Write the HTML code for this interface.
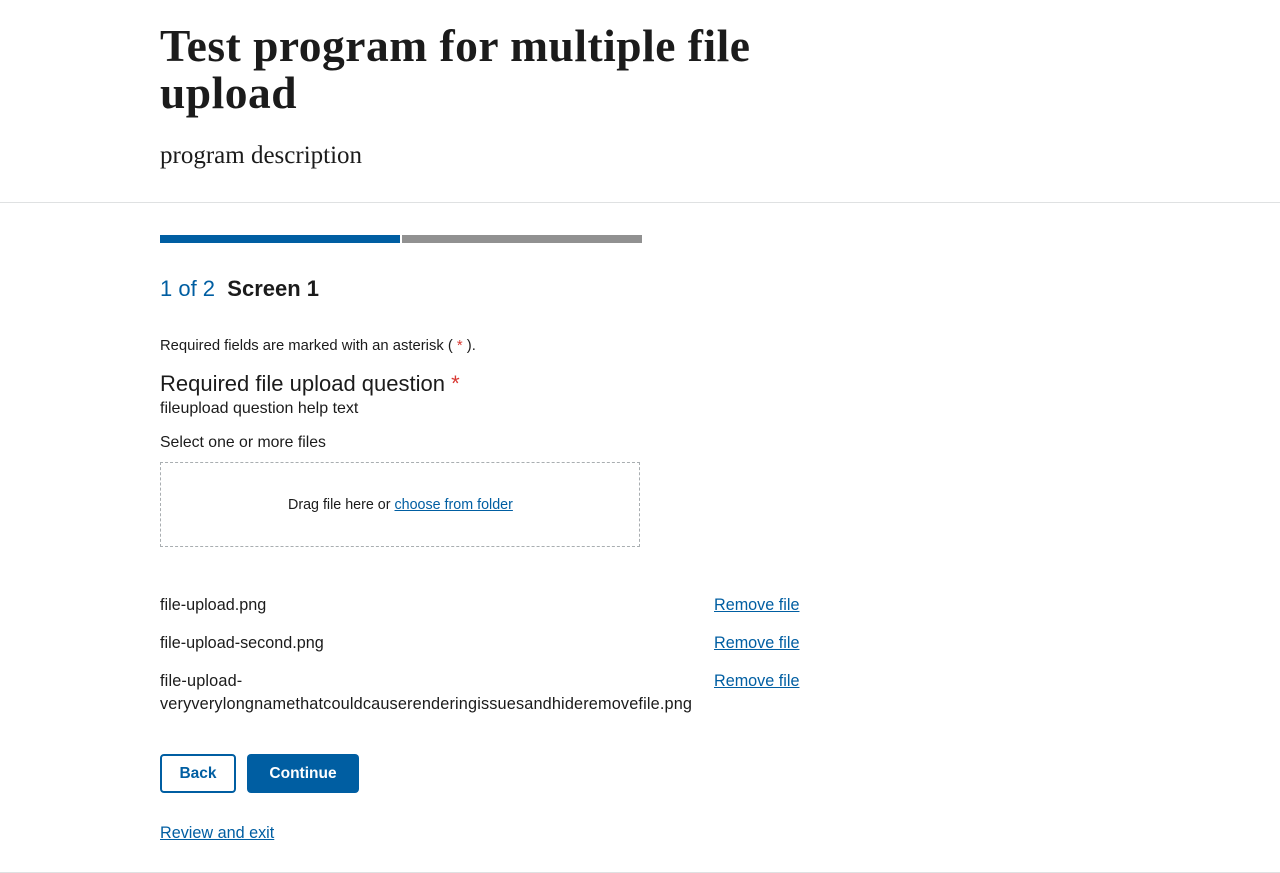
<!DOCTYPE html>
<html><head><meta charset="utf-8"><style>
body{margin:0;width:1280px;height:873px;position:relative;background:#fff;font-family:"Liberation Sans",sans-serif;color:#1b1b1b;overflow:hidden}
.a{position:absolute;white-space:nowrap}
h1{position:absolute;left:160px;top:22px;margin:0;font-family:"Liberation Serif",serif;font-weight:bold;font-size:45.5px;line-height:47px;letter-spacing:0.5px}
.link{color:#005ea2;text-decoration:underline}
</style></head><body>
<h1>Test program for multiple file<br>upload</h1>
<div class="a" style="left:160px;top:142px;font-family:'Liberation Serif',serif;font-size:25px">program description</div>
<div class="a" style="left:0;top:202px;width:1280px;height:1px;background:#dfe1e2"></div>
<div class="a" style="left:160px;top:235px;width:240px;height:8px;background:#005ea2"></div>
<div class="a" style="left:402px;top:235px;width:240px;height:8px;background:#919191"></div>
<div class="a" style="left:160px;top:276px;font-size:22px"><span style="color:#005ea2">1 of 2</span>&nbsp; <b>Screen 1</b></div>
<div class="a" style="left:160px;top:338px;font-size:14.8px">Required fields are marked with an asterisk ( <span style="color:#d83933">*</span> ).</div>
<div class="a" style="left:160px;top:371px;font-size:22px">Required file upload question <span style="color:#d83933">*</span></div>
<div class="a" style="left:160px;top:400px;font-size:16px">fileupload question help text</div>
<div class="a" style="left:160px;top:434px;font-size:15.8px">Select one or more files</div>
<div class="a" style="left:160px;top:462px;width:478px;height:83px;border:1px dashed #a9aeb1"></div>
<div class="a" style="left:288px;top:497px;font-size:14.3px">Drag file here or <span class="link">choose from folder</span></div>
<div class="a" style="left:160px;top:596px;font-size:16.2px">file-upload.png</div>
<div class="a" style="left:160px;top:634px;font-size:16.2px">file-upload-second.png</div>
<div class="a" style="left:160px;top:670px;font-size:16.3px;line-height:23px;letter-spacing:0.15px">file-upload-<br>veryverylongnamethatcouldcauserenderingissuesandhideremovefile.png</div>
<div class="a link" style="left:714px;top:596px;font-size:16.2px">Remove file</div>
<div class="a link" style="left:714px;top:634px;font-size:16.2px">Remove file</div>
<div class="a link" style="left:714px;top:672px;font-size:16.2px">Remove file</div>
<div class="a" style="left:160px;top:754px;width:72px;height:35px;border:2px solid #005ea2;border-radius:4px;color:#005ea2;font-weight:bold;font-size:15.5px;text-align:center;line-height:35px">Back</div>
<div class="a" style="left:247px;top:754px;width:112px;height:39px;background:#005ea2;border-radius:4px;color:#fff;font-weight:bold;font-size:15.5px;text-align:center;line-height:39px">Continue</div>
<div class="a link" style="left:160px;top:824px;font-size:16.2px">Review and exit</div>
<div class="a" style="left:0;top:872px;width:1280px;height:1px;background:#dfe1e2"></div>
</body></html>
